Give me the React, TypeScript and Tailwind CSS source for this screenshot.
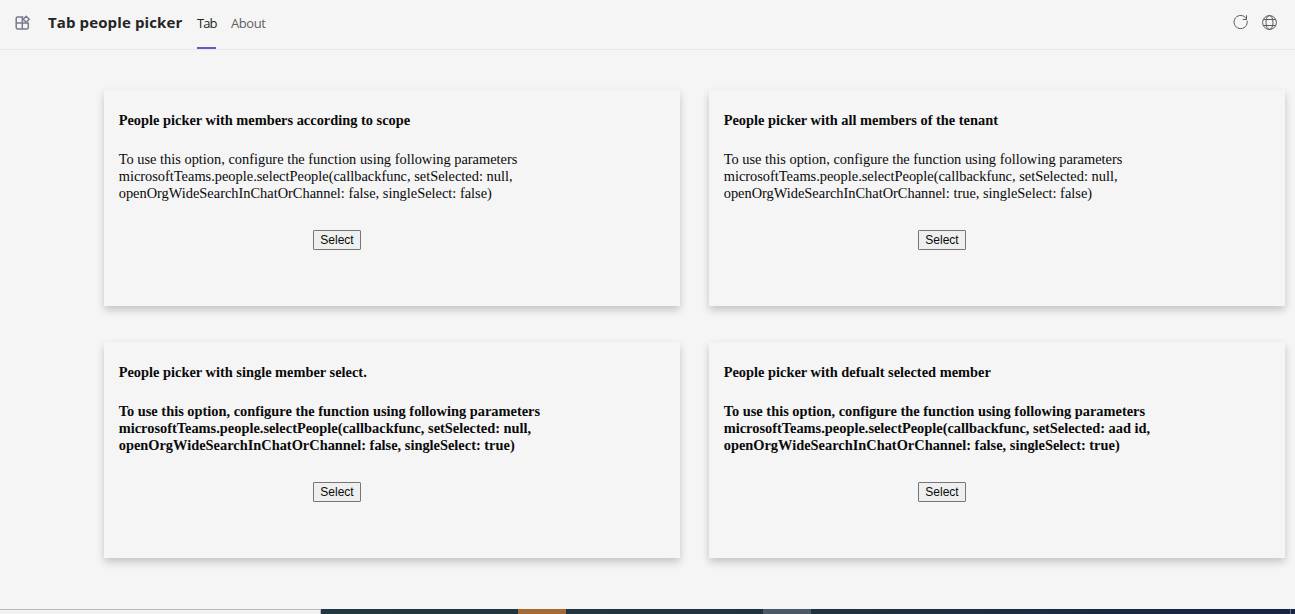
type Option = { title: string; lines: string[]; bold?: boolean };

const intro = 'To use this option, configure the function using following parameters';

const options: Option[] = [
  {
    title: 'People picker with members according to scope',
    lines: [
      intro,
      'microsoftTeams.people.selectPeople(callbackfunc, setSelected: null,',
      'openOrgWideSearchInChatOrChannel: false, singleSelect: false)',
    ],
  },
  {
    title: 'People picker with all members of the tenant',
    lines: [
      intro,
      'microsoftTeams.people.selectPeople(callbackfunc, setSelected: null,',
      'openOrgWideSearchInChatOrChannel: true, singleSelect: false)',
    ],
  },
  {
    title: 'People picker with single member select.',
    bold: true,
    lines: [
      intro,
      'microsoftTeams.people.selectPeople(callbackfunc, setSelected: null,',
      'openOrgWideSearchInChatOrChannel: false, singleSelect: true)',
    ],
  },
  {
    title: 'People picker with defualt selected member',
    bold: true,
    lines: [
      intro,
      'microsoftTeams.people.selectPeople(callbackfunc, setSelected: aad id,',
      'openOrgWideSearchInChatOrChannel: false, singleSelect: true)',
    ],
  },
];

function AppIcon() {
  return (
    <svg className="h-4 w-4" viewBox="0 0 16 16" fill="none" stroke="#757b8b" strokeWidth="1.5" strokeLinejoin="round">
      <path d="M9.3 2H3.7A1.5 1.5 0 0 0 2.2 3.5v9a1.5 1.5 0 0 0 1.5 1.5h9.1a1.5 1.5 0 0 0 1.5-1.5V8.1H2.2M8.3 2v12" />
      <path d="M12.2 1.3 15.2 4.3l-3 3-3-3z" fill="#f5f5f5" />
    </svg>
  );
}

function RefreshIcon() {
  return (
    <svg className="h-4 w-4" viewBox="0 0 16 16" fill="none" stroke="#5c5c5c" strokeWidth="1">
      <path d="M14.1 6.7A6.6 6.6 0 1 1 13.5 5M13.5 1.2v4.3H9.8" />
    </svg>
  );
}

function GlobeIcon() {
  return (
    <svg className="h-4 w-4" viewBox="0 0 16 16" fill="none" stroke="#5c5c5c" strokeWidth="1">
      <circle cx="7.5" cy="8.5" r="6.9" />
      <ellipse cx="7.5" cy="8.5" rx="3.5" ry="6.9" />
      <path d="M1.2 5.5h12.6M1.2 11.5h12.6" />
    </svg>
  );
}

function Card({ title, lines, bold }: Option) {
  return (
    <section className="h-[216px] bg-[#f5f5f5] pl-[14.7px] pt-[22px] shadow-[0_4px_8px_0_rgba(0,0,0,0.2)]">
      <h2 className="text-[14.4px] leading-[17px] font-bold whitespace-nowrap">{title}</h2>
      <div className={bold ? 'mt-[22px] font-bold' : 'mt-[22px]'}>
        {lines.map((line) => (
          <p key={line} className="text-[14.4px] leading-[17px] whitespace-nowrap">
            {line}
          </p>
        ))}
      </div>
      <button className="mt-[28px] ml-[194.3px] flex h-5 w-12 items-center justify-center rounded-[1px] border border-[#767676] bg-[#efefef] font-['Liberation_Sans',sans-serif] text-[12px] leading-none">
        Select
      </button>
    </section>
  );
}

export default function App() {
  return (
    <div className="flex h-[614px] w-[1295px] flex-col overflow-hidden bg-[#f5f5f5] font-['Liberation_Serif',serif] text-[#0a0a0a]">
      <header className="flex h-[50px] shrink-0 items-center border-b border-[#e8e8e8] pr-[17px] pl-[14px] font-['Open_Sans',sans-serif]">
        <div className="flex h-full items-center pb-[4px]">
          <AppIcon />
        </div>
        <h1 className="ml-[18px] w-[149px] pb-[5px] text-[15px] font-bold tracking-[0.12px] whitespace-nowrap text-[#242424]">Tab people picker</h1>
        <nav className="flex h-full text-[13px] whitespace-nowrap">
          <a className="flex h-[49px] w-[19px] items-center border-b-2 border-[#5b5fc7] tracking-[-0.9px] text-[#242424]">Tab</a>
          <a className="ml-[15px] flex h-[49px] items-center pb-[2px] tracking-[-0.4px] text-[#616161]">About</a>
        </nav>
        <div className="ml-auto flex gap-[13px] pb-[5px]">
          <RefreshIcon />
          <GlobeIcon />
        </div>
      </header>
      <main className="grid grow grid-cols-[576px_576px] content-start gap-x-[29px] gap-y-9 pt-10 pl-[104px]">
        {options.map((option) => (
          <Card key={option.title} {...option} />
        ))}
      </main>
      <footer className="flex h-[5px] shrink-0 bg-linear-to-r from-[#20383f] from-25% via-[#1e3240] via-65% to-[#172443] to-95%">
        <div className="w-[321px] border-t border-r border-[#b9b9b9] bg-[#f2f2f2]" />
        <div className="ml-[197px] w-12 bg-[#a66a35]" />
        <div className="ml-[197px] w-12 bg-[#4a5967]" />
        <div className="ml-[479px] w-px bg-[#687386]" />
      </footer>
    </div>
  );
}
